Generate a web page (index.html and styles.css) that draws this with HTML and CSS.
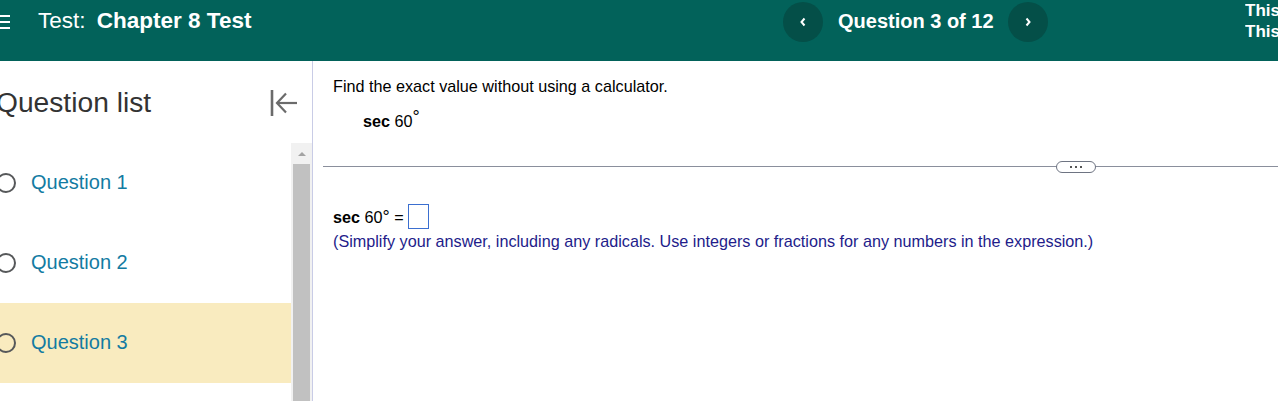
FILE: index.html
```html
<!DOCTYPE html>
<html lang="en">
<head>
<meta charset="utf-8">
<title>Test: Chapter 8 Test</title>
<link rel="stylesheet" href="styles.css">
</head>
<body>
<header class="topbar">
  <div class="topbar-row">
    <div class="title-area">
      <span class="hamburger" aria-hidden="true"><i></i><i></i><i></i></span>
      <h1 class="title"><span class="title-kind">Test:</span> <span class="title-name">Chapter 8 Test</span></h1>
    </div>
    <nav class="qnav">
      <button class="navbtn" aria-label="Previous question">
        <svg width="8" height="10" viewBox="0 0 8 10"><polyline points="5.5,1.5 2.5,5 5.5,8.5" fill="none" stroke="#fff" stroke-width="2"/></svg>
      </button>
      <span class="qnav-label">Question 3 of 12</span>
      <button class="navbtn" aria-label="Next question">
        <svg width="8" height="10" viewBox="0 0 8 10"><polyline points="2.5,1.5 5.5,5 2.5,8.5" fill="none" stroke="#fff" stroke-width="2"/></svg>
      </button>
    </nav>
    <div class="topright">
      <div>This</div>
      <div>This</div>
    </div>
  </div>
</header>

<div class="layout">
  <aside class="sidebar">
    <div class="sidebar-head">
      <h2 class="sidebar-title">Question list</h2>
      <button class="collapse" aria-label="Collapse question list">
        <svg width="28" height="26" viewBox="0 0 28 26">
          <line x1="2" y1="0" x2="2" y2="26" stroke="#6b6b6b" stroke-width="2.6"/>
          <line x1="7" y1="13" x2="27" y2="13" stroke="#6b6b6b" stroke-width="2.2"/>
          <polyline points="16,3.5 7,13 16,22.5" fill="none" stroke="#6b6b6b" stroke-width="2.2"/>
        </svg>
      </button>
    </div>
    <div class="sidebar-body">
      <ul class="qlist">
        <li class="qitem"><span class="qcircle"></span><span class="qtext">Question 1</span></li>
        <li class="qitem"><span class="qcircle"></span><span class="qtext">Question 2</span></li>
        <li class="qitem current"><span class="qcircle"></span><span class="qtext">Question 3</span></li>
      </ul>
      <div class="scrollbar">
        <div class="scroll-up"><span class="tri"></span></div>
        <div class="scroll-thumb"></div>
      </div>
    </div>
  </aside>

  <main class="content">
    <p class="prompt">Find the exact value without using a calculator.</p>
    <p class="expr"><b>sec</b> 60<span class="deg">°</span></p>
    <div class="divider">
      <span class="pill"><i></i><i></i><i></i></span>
    </div>
    <div class="answer">
      <b>sec</b>&nbsp;60<span class="deg">°</span>&nbsp;=&nbsp;<span class="ansbox"></span>
    </div>
    <p class="hint">(Simplify your answer, including any radicals. Use integers or fractions for any numbers in the expression.)</p>
  </main>
</div>
</body>
</html>
```

FILE: styles.css
```css
* { box-sizing: border-box; }

html, body {
  margin: 0;
  padding: 0;
}

body {
  width: 1278px;
  height: 401px;
  overflow: hidden;
  font-family: "Liberation Sans", Arial, sans-serif;
  background: #fff;
  color: #000;
}

/* ---------- top bar ---------- */
.topbar {
  height: 61px;
  background: #02625a;
  color: #fff;
  overflow: hidden;
}

.topbar-row {
  display: flex;
  align-items: center;
  height: 42px;
}

.title-area {
  flex: 0 0 783px;
  display: flex;
  align-items: center;
}

.hamburger {
  display: flex;
  flex-direction: column;
  gap: 4px;
  width: 10px;
  margin-top: 1px;
}
.hamburger i {
  display: block;
  height: 2px;
  background: #fff;
}

.title {
  margin: 0 0 0 28px;
  font-size: 22.5px;
  font-weight: normal;
  line-height: 26px;
  white-space: nowrap;
}
.title-name {
  font-weight: bold;
  margin-left: 5px;
}

.qnav {
  display: flex;
  align-items: center;
  flex: 0 0 auto;
}

.navbtn {
  width: 40px;
  height: 40px;
  border: 0;
  border-radius: 50%;
  background: #044f48;
  display: flex;
  align-items: center;
  justify-content: center;
  padding: 0;
  margin-top: 1px;
}

.qnav-label {
  font-size: 20px;
  font-weight: bold;
  margin: 0 14px 0 15px;
  white-space: nowrap;
}

.topright {
  margin-left: auto;
  width: 33px;
  overflow: hidden;
  white-space: nowrap;
  font-size: 17px;
  font-weight: bold;
  line-height: 21px;
  align-self: flex-start;
}

/* ---------- layout ---------- */
.layout {
  display: flex;
  height: 340px;
}

.sidebar {
  flex: 0 0 313px;
  border-right: 1px solid #c9cce6;
  display: flex;
  flex-direction: column;
}

.sidebar-head {
  height: 82px;
  display: flex;
  align-items: center;
}

.sidebar-title {
  margin: 0 0 0 -4px;
  font-size: 28.2px;
  font-weight: normal;
  color: #333;
  line-height: 32px;
}

.collapse {
  margin-left: auto;
  margin-right: 14px;
  border: 0;
  background: none;
  padding: 0;
  display: flex;
  margin-top: 1px;
}

.sidebar-body {
  flex: 1;
  display: flex;
}

.qlist {
  list-style: none;
  margin: 0;
  padding: 0;
  flex: 0 0 291px;
}

.qitem {
  height: 80px;
  display: flex;
  align-items: center;
  padding-bottom: 1px;
}
.qitem.current {
  background: #f9ebbf;
}

.qcircle {
  width: 20px;
  height: 20px;
  border: 2.5px solid #56585a;
  border-radius: 50%;
  margin-left: -4px;
  flex: 0 0 auto;
}

.qtext {
  margin-left: 15px;
  font-size: 20px;
  color: #137ba2;
}

.scrollbar {
  flex: 0 0 21px;
  background: #f1f1f1;
  display: flex;
  flex-direction: column;
}
.scroll-up {
  height: 21px;
  display: flex;
  align-items: center;
  justify-content: center;
}
.tri {
  width: 0;
  height: 0;
  border-left: 4px solid transparent;
  border-right: 4px solid transparent;
  border-bottom: 4px solid #a3a3a3;
}
.scroll-thumb {
  flex: 1;
  margin: 0 2px;
  background: #c1c1c1;
}

/* ---------- main content ---------- */
.content {
  flex: 1;
  padding: 16px 0 0 20px;
  font-size: 16.2px;
  line-height: 18px;
}

.prompt {
  margin: 0;
}

.expr {
  margin: 17px 0 0 30px;
}

.deg {
  vertical-align: 4px;
  line-height: 0;
  font-size: 18px;
}

.divider {
  position: relative;
  margin: 36px 0 0 -10px;
  height: 1px;
  background: #8a8f9c;
}

.pill {
  position: absolute;
  left: 733px;
  top: -5px;
  width: 40px;
  height: 12px;
  border: 1.5px solid #6e7482;
  border-radius: 6px;
  background: #fff;
  display: flex;
  align-items: center;
  justify-content: center;
  gap: 3px;
}
.pill i {
  width: 2px;
  height: 2px;
  background: #555;
}

.answer {
  margin-top: 37px;
  height: 25px;
  display: flex;
  align-items: center;
}

.ansbox {
  display: inline-block;
  width: 21px;
  height: 25px;
  border: 1px solid #3b6fd0;
}

.hint {
  margin: 3px 0 0;
  color: #231c8a;
}
```
